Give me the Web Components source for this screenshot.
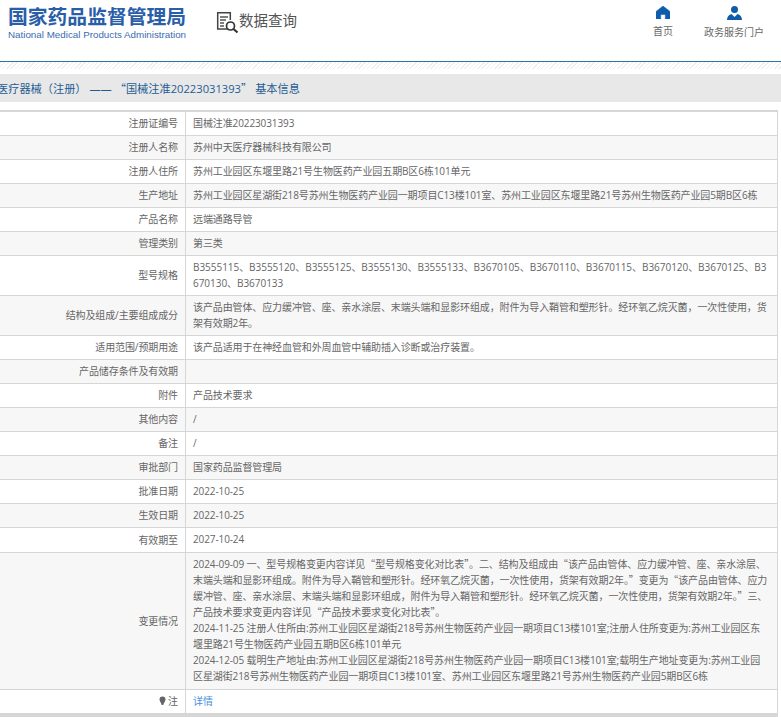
<!DOCTYPE html>
<html lang="zh-CN">
<head>
<meta charset="utf-8">
<title>数据查询</title>
<style>
  html, body { margin: 0; padding: 0; background: #fff; overflow: hidden; }
  body { width: 781px; height: 717px; font-family: "Open Sans", "Noto Sans CJK SC", sans-serif; }
  a { color: #4a8fe0; text-decoration: none; }
  /* full width quotes, the latin ones are too narrow */
  .q { font-family: "Noto Sans CJK SC", sans-serif; line-height: 0; }
</style>
</head>
<body>
<nmpa-header></nmpa-header>
<nmpa-crumb>医疗器械（注册） —— <span class="q">“</span>国械注准20223031393<span class="q">”</span> 基本信息</nmpa-crumb>
<nmpa-table>
  <nmpa-row label="注册证编号">国械注准20223031393</nmpa-row>
  <nmpa-row label="注册人名称">苏州中天医疗器械科技有限公司</nmpa-row>
  <nmpa-row label="注册人住所">苏州工业园区东堰里路21号生物医药产业园五期B区6栋101单元</nmpa-row>
  <nmpa-row label="生产地址">苏州工业园区星湖街218号苏州生物医药产业园一期项目C13楼101室、苏州工业园区东堰里路21号苏州生物医药产业园5期B区6栋</nmpa-row>
  <nmpa-row label="产品名称">远端通路导管</nmpa-row>
  <nmpa-row label="管理类别">第三类</nmpa-row>
  <nmpa-row label="型号规格" style="letter-spacing:-.04px">B3555115、B3555120、B3555125、B3555130、B3555133、B3670105、B3670110、B3670115、B3670120、B3670125、B3670130、B3670133</nmpa-row>
  <nmpa-row label="结构及组成/主要组成成分">该产品由管体、应力缓冲管、座、亲水涂层、末端头端和显影环组成，附件为导入鞘管和塑形针。经环氧乙烷灭菌，一次性使用，货架有效期2年。</nmpa-row>
  <nmpa-row label="适用范围/预期用途">该产品适用于在神经血管和外周血管中辅助插入诊断或治疗装置。</nmpa-row>
  <nmpa-row label="产品储存条件及有效期"></nmpa-row>
  <nmpa-row label="附件">产品技术要求</nmpa-row>
  <nmpa-row label="其他内容">/</nmpa-row>
  <nmpa-row label="备注">/</nmpa-row>
  <nmpa-row label="审批部门">国家药品监督管理局</nmpa-row>
  <nmpa-row label="批准日期">2022-10-25</nmpa-row>
  <nmpa-row label="生效日期">2022-10-25</nmpa-row>
  <nmpa-row label="有效期至" style="--pad-bottom:5px">2027-10-24</nmpa-row>
  <nmpa-row label="变更情况" style="--pad-top:3px;--pad-bottom:5px">2024-09-09 一、型号规格变更内容详见<span class="q">“</span>型号规格变化对比表<span class="q">”</span>。二、结构及组成由<span class="q">“</span>该产品由管体、应力缓冲管、座、亲水涂层、末端头端和显影环组成。附件为导入鞘管和塑形针。经环氧乙烷灭菌，一次性使用，货架有效期2年。<span class="q">”</span>变更为<span class="q">“</span>该产品由管体、应力缓冲管、座、亲水涂层、末端头端和显影环组成，附件为导入鞘管和塑形针。经环氧乙烷灭菌，一次性使用，货架有效期2年。<span class="q">”</span>三、产品技术要求变更内容详见<span class="q">“</span>产品技术要求变化对比表<span class="q">”</span>。<br>2024-11-25 注册人住所由:苏州工业园区星湖街218号苏州生物医药产业园一期项目C13楼101室;注册人住所变更为:苏州工业园区东堰里路21号生物医药产业园五期B区6栋101单元<br>2024-12-05 载明生产地址由:苏州工业园区星湖街218号苏州生物医药产业园一期项目C13楼101室;载明生产地址变更为:苏州工业园区星湖街218号苏州生物医药产业园一期项目C13楼101室、苏州工业园区东堰里路21号苏州生物医药产业园5期B区6栋</nmpa-row>
  <nmpa-row>
    <span slot="label"><svg width="7" height="10" viewBox="0 0 7 10" style="vertical-align:-1px;margin-right:2px"><path d="M3.500 0.500a3 3 0 0 1 3 3c0 1.800-1.600 3-2.200 5.500h-1.600C2.100 6.500.5 5.300.5 3.500a3 3 0 0 1 3-3z" fill="#666"/></svg>注</span>
    <a href="#">详情</a>
  </nmpa-row>
</nmpa-table>
<script>
class NmpaHeader extends HTMLElement {
  constructor() {
    super()
    this.attachShadow({mode: 'open'})
    this.shadowRoot.innerHTML = /*html*/ `
      <style>
        :host { display: block; font-family: "Noto Sans CJK SC", sans-serif; }
        .bar { display: flex; height: 61px; border-bottom: 1px solid #2a76a8; }
        .hatch { height: 7px; background: repeating-linear-gradient(135deg, #efefef 0 1px, #fff 1px 3px); }
        .logo { margin-left: 8px; padding-top: 3px; width: 178px; flex: none; }
        .logo b { display: block; font: bold 19.8px/25px "Noto Sans CJK SC", sans-serif; color: #2a5ea8; white-space: nowrap; }
        .logo span { display: block; font: 9.8px/14px "Liberation Sans", sans-serif; color: #3a6cb0; white-space: nowrap; }
        .search { display: flex; align-items: flex-start; margin-left: 30px; padding-top: 11px; font-size: 14.5px; line-height: 20px; color: #555; }
        .search svg { flex: none; }
        .search span { margin-top: -1px; }
        nav { display: flex; gap: 31px; margin-left: auto; padding-right: 17px; padding-top: 6px; }
        .item { display: flex; flex-direction: column; align-items: center; font-size: 10px; line-height: 14px; color: #666; }
        .item svg { margin-bottom: 5px; }
      </style>
      <div class="bar">
        <div class="logo"><b>国家药品监督管理局</b><span>National Medical Products Administration</span></div>
        <div class="search">
          <svg width="23" height="23" viewBox="0 0 23 23">
            <path d="M13 18H1.700V1.700h12.600V9" fill="none" stroke="#444" stroke-width="1.500"/>
            <path d="M4 6h8M4 9h6M4 12h4M4 15h4" stroke="#555" stroke-width="1.300"/>
            <circle cx="14.500" cy="15" r="4" fill="#fff" stroke="#333" stroke-width="1.700"/>
            <path d="M17.500 18l4 3.500" stroke="#333" stroke-width="2.200"/>
          </svg>
          <span>数据查询</span>
        </div>
        <nav>
          <div class="item">
            <svg width="14" height="13" viewBox="0 0 14 13"><path d="M7 0L14 5.500V13H9.300V8.500H4.700V13H0V5.500z" fill="#0f5cad" stroke="#0f5cad" stroke-width=".5" stroke-linejoin="round"/></svg>
            首页
          </div>
          <div class="item">
            <svg width="15" height="14" viewBox="0 0 15 14"><circle cx="7.500" cy="3.500" r="3.500" fill="#0f5cad"/><path d="M0 14c0-3.500 2-5.500 4.500-6l3 3 3-3c2.500.5 4.500 2.500 4.500 6z" fill="#0f5cad"/></svg>
            政务服务门户
          </div>
        </nav>
      </div>
      <div class="hatch"></div>
    `
  }
}
customElements.define('nmpa-header', NmpaHeader)

class NmpaCrumb extends HTMLElement {
  constructor() {
    super()
    this.attachShadow({mode: 'open'})
    this.shadowRoot.innerHTML = /*html*/ `
      <style>
        :host { display: block; margin-top: 5px; height: 28px; background: #e8e8e8; color: #1f5c94; font-family: "Open Sans", "Noto Sans CJK SC", sans-serif; font-size: 11.2px; line-height: 29px; white-space: nowrap; overflow: hidden; }
        div { margin-left: -3px; }
      </style>
      <div><slot></slot></div>
    `
  }
}
customElements.define('nmpa-crumb', NmpaCrumb)

class NmpaTable extends HTMLElement {
  constructor() {
    super()
    this.attachShadow({mode: 'open'})
    this.shadowRoot.innerHTML = /*html*/ `
      <style>
        :host { display: block; width: 778px; margin-top: 8px; box-sizing: border-box; border-top: 2px solid #d6d6d6; border-right: 1px solid #d6d6d6; border-bottom: 4px solid #d6d6d6; }
        ::slotted(nmpa-row:nth-of-type(even)) { background: #f7f7f7; }
      </style>
      <slot></slot>
    `
  }
}
customElements.define('nmpa-table', NmpaTable)

class NmpaRow extends HTMLElement {
  constructor() {
    super()
    this.attachShadow({mode: 'open'})
    this.shadowRoot.innerHTML = /*html*/ `
      <style>
        :host { display: grid; grid-template-columns: 186px 1fr; border-bottom: 1px solid #d6d6d6; font-size: 10px; letter-spacing: -.11px; line-height: 16px; color: #666; }
        :host(:last-child) { border-bottom: 0; }
        .label { display: flex; align-items: center; justify-content: flex-end; padding: 3px 7px 4px 0; border-right: 1px solid #d6d6d6; text-align: right; white-space: nowrap; }
        .value { padding: var(--pad-top, 3px) 8px var(--pad-bottom, 4px) 7px; word-break: break-all; }
      </style>
      <div class="label"><slot name="label"></slot></div>
      <div class="value"><slot></slot></div>
    `
    this.shadowRoot.querySelector('slot[name=label]').textContent = this.getAttribute('label') || ''
  }
}
customElements.define('nmpa-row', NmpaRow)
</script>
</body>
</html>
